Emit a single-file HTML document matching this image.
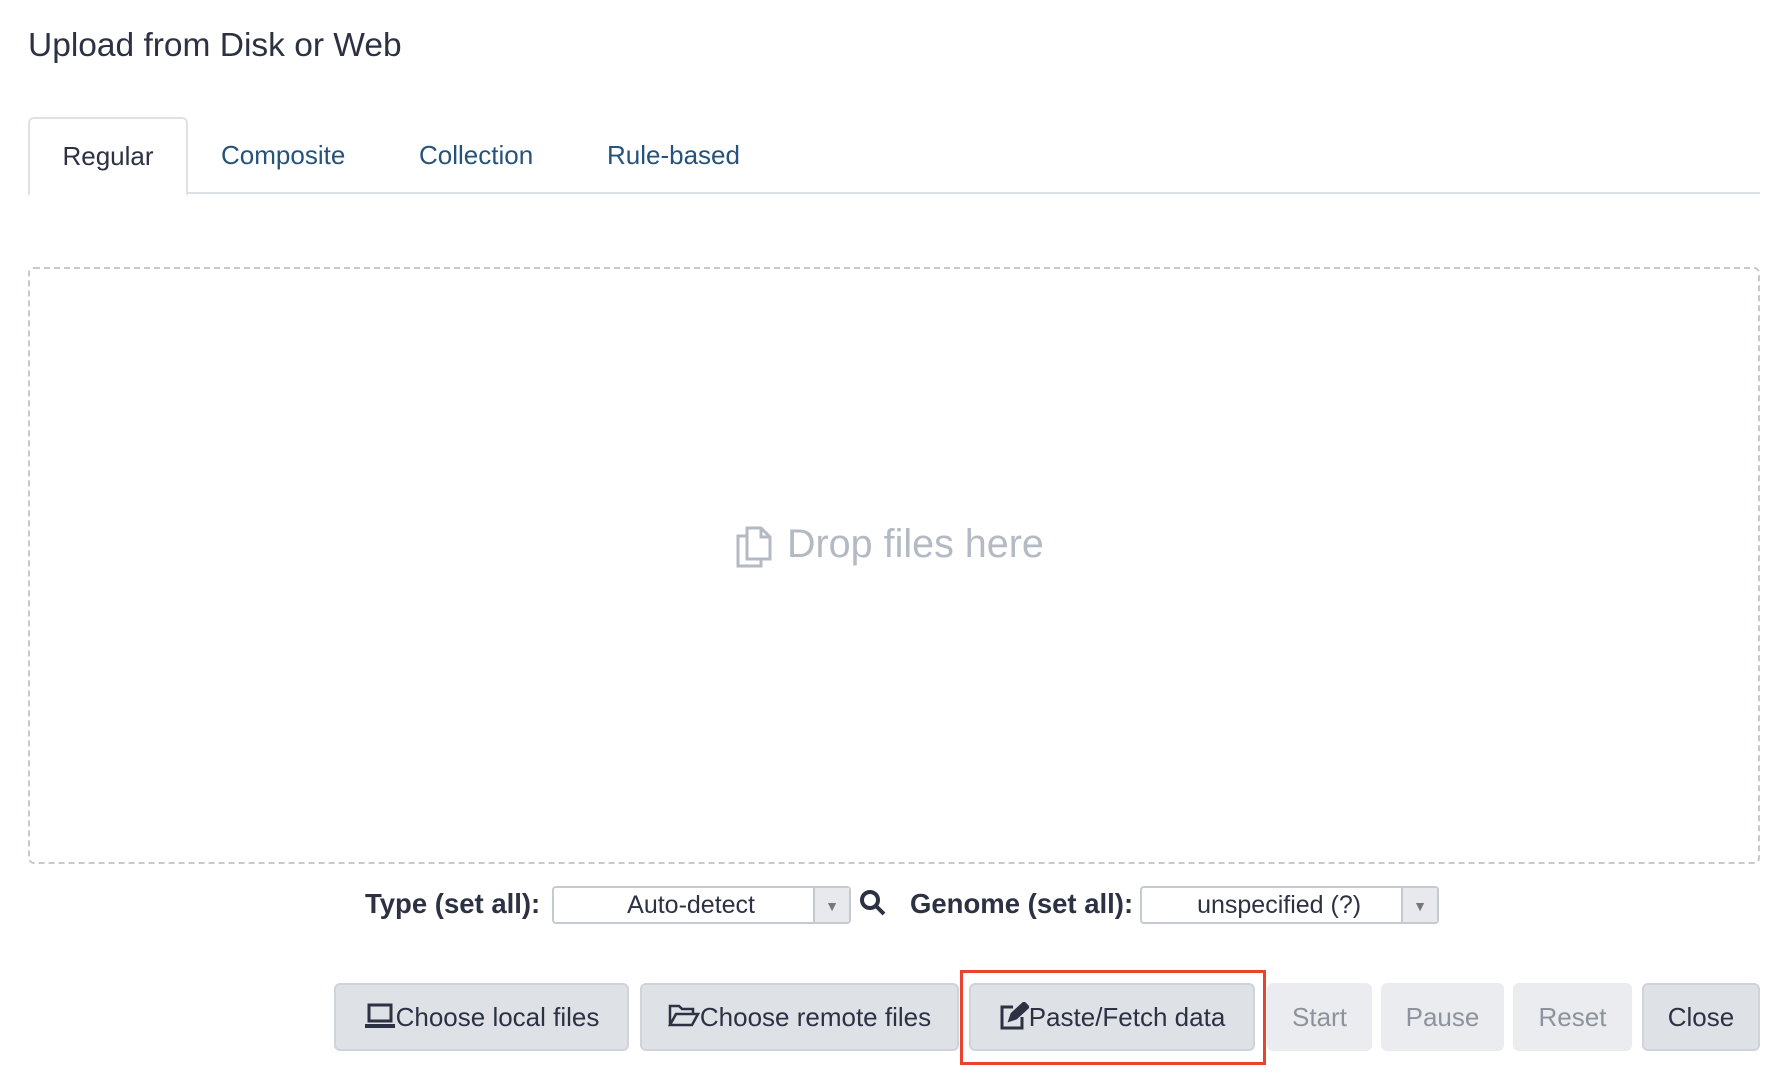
<!DOCTYPE html>
<html><head><meta charset="utf-8"><style>
body{margin:0;width:1788px;height:1084px;background:#fff;font-family:"Liberation Sans",sans-serif;color:#2c3143;position:relative;overflow:hidden}
.a{position:absolute}
h1{position:absolute;left:28px;top:27px;margin:0;font-size:33.5px;font-weight:normal;color:#2c3143}
.tabline{left:28px;top:192px;width:1732px;height:2px;background:#dee2e6}
.tab{top:117px;height:77px;line-height:77px;font-size:26px;color:#25537b}
.tabact{left:28px;top:117px;width:156px;height:75px;border:2px solid #dee2e6;border-bottom:2px solid #fff;border-radius:6px 6px 0 0;background:#fff;text-align:center;line-height:75px;font-size:26px;color:#2c3143}
.drop{left:28px;top:267px;width:1728px;height:593px;border:2px dashed #c5c9d0;border-radius:6px}
.lbl{font-size:27.5px;font-weight:bold;top:885px;line-height:38px}
.sel{top:886px;height:34px;border:2px solid #c5c9d0;border-radius:4px;background:#fff;font-size:25px;line-height:34px;text-align:center;color:#2c3143}
.sel .arr{position:absolute;right:0;top:0;width:34px;height:34px;background:#e8e9ec;border-left:2px solid #c5c9d0;color:#777;font-size:14px;line-height:36px}
.btn{top:983px;height:64px;border:2px solid #cfd3da;border-radius:6px;background:#dee2e6;font-size:26px;line-height:64px;text-align:center;color:#2c3143;box-sizing:content-box}
.dis{background:#ebecef;border-color:#ebecef;color:#8d939e}
</style></head><body>
<h1>Upload from Disk or Web</h1>
<div class="a tabline"></div>
<div class="a tabact">Regular</div>
<div class="a tab" style="left:221px">Composite</div>
<div class="a tab" style="left:419px">Collection</div>
<div class="a tab" style="left:607px">Rule-based</div>
<div class="a drop"></div>
<svg class="a" style="left:735px;top:526px" width="38" height="42" viewBox="0 0 38 42" fill="none" stroke="#b4bac4" stroke-width="3"><path d="M12 2h14l9 9v22H12z"/><path d="M26 2v9h9"/><path d="M12 10H3v30h23v-7"/></svg>
<div class="a" style="left:787px;top:522px;font-size:39.5px;color:#b4bac4">Drop files here</div>
<div class="a lbl" style="left:365px">Type (set all):</div>
<div class="a sel" style="left:552px;width:295px">Auto-detect&nbsp;&nbsp;&nbsp;<span class="arr">▼</span></div>
<svg class="a" style="left:858px;top:888px" width="30" height="30" viewBox="0 0 30 30" fill="none" stroke="#2c3143" stroke-width="4"><circle cx="12" cy="12" r="8"/><path d="M18 18l8 8"/></svg>
<div class="a lbl" style="left:910px">Genome (set all):</div>
<div class="a sel" style="left:1140px;width:295px">unspecified (?)&nbsp;&nbsp;&nbsp;<span class="arr">▼</span></div>
<div class="a btn" style="left:334px;width:291px"><svg width="32" height="28" viewBox="0 0 32 28" style="vertical-align:-4px" fill="none" stroke="#2c3143" stroke-width="3"><rect x="5" y="3" width="22" height="16"/><path d="M1 24h30" stroke-width="4"/></svg>Choose local files</div>
<div class="a btn" style="left:640px;width:315px"><svg width="32" height="26" viewBox="0 0 32 26" style="vertical-align:-3px" fill="none" stroke="#2c3143" stroke-width="2.5"><path d="M2 22V3h9l3 3h11v5"/><path d="M2 22l6-11h22l-6 11z"/></svg>Choose remote files</div>
<div class="a" style="left:960px;top:970px;width:300px;height:89px;border:3px solid #e8432c"></div>
<div class="a btn" style="left:969px;width:282px"><svg width="30" height="28" viewBox="0 0 30 28" style="vertical-align:-4px" fill="none" stroke="#2c3143" stroke-width="3"><path d="M14 5H3v21h20V15"/><path d="M11 18l2-6 12-11 4 4-12 11z" fill="#2c3143"/></svg>Paste/Fetch data</div>
<div class="a btn dis" style="left:1267px;width:101px">Start</div>
<div class="a btn dis" style="left:1381px;width:119px">Pause</div>
<div class="a btn dis" style="left:1513px;width:115px">Reset</div>
<div class="a btn" style="left:1642px;width:114px">Close</div>
</body></html>
